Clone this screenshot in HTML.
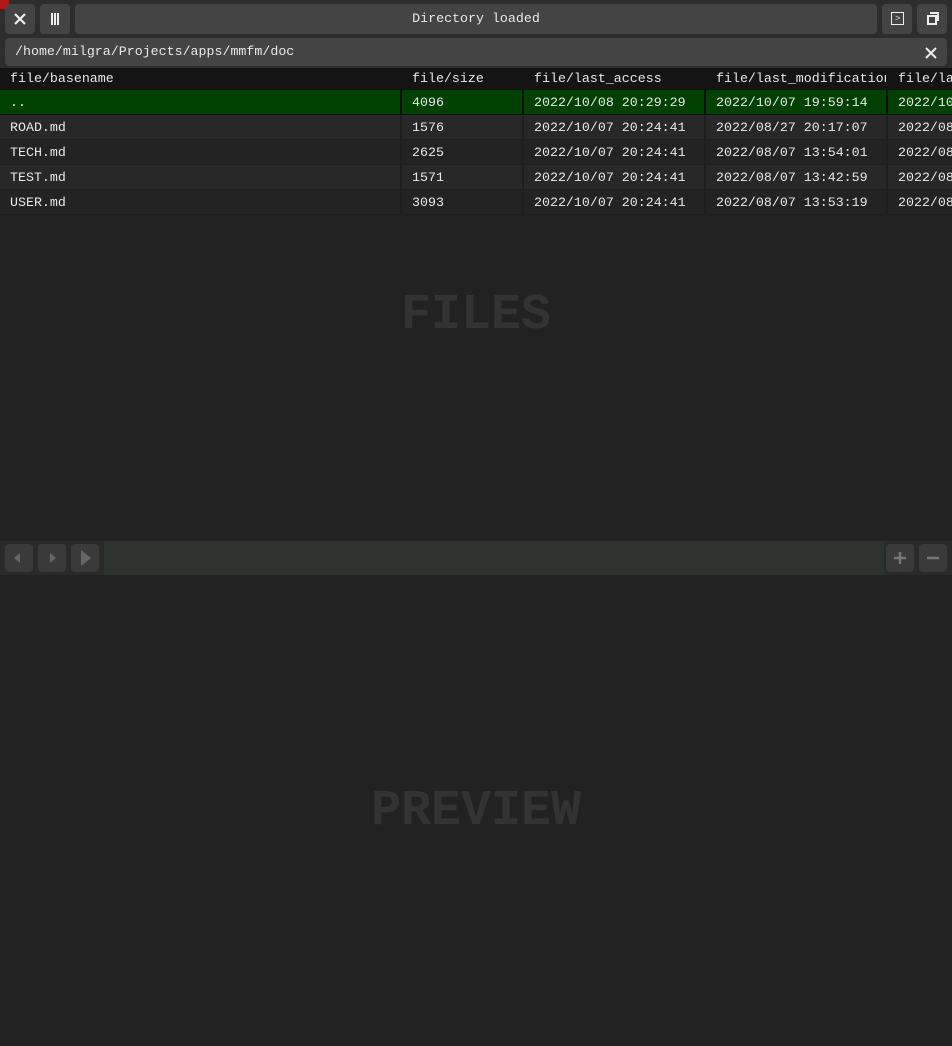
<!DOCTYPE html>
<html><head><style>
*{box-sizing:border-box;margin:0;padding:0}
body{width:952px;height:1046px;background:#222;overflow:hidden;position:relative;font-family:"Liberation Mono",monospace;font-size:13.3px;color:#e8e8e8}
.top{position:absolute;left:0;top:0;width:952px;height:68px;background:#2d2d2d}
.btn{position:absolute;background:#444;border-radius:4px}
.hdr{position:absolute;top:68px;left:0;width:952px;height:22px;background:#141414}
.c{position:absolute;white-space:nowrap;overflow:hidden;line-height:25px;padding-left:10px}
.row{position:absolute;left:0;width:952px;height:25px}
.big{position:absolute;font-size:50px;color:#333;letter-spacing:0;font-weight:bold;text-align:center;width:952px;left:0}
.bar{position:absolute;left:0;top:541px;width:952px;height:34px;background:#2a2a2a}
.bb{position:absolute;top:3px;width:28px;height:28px;background:#3a3a3a;border-radius:4px}
</style></head><body>
<div class="top">
<div style="position:absolute;left:0;top:0;width:9px;height:9px;background:#b01818"></div>
<div class="btn" style="left:5px;top:4px;width:30px;height:30px"><svg width="30" height="30" style="position:absolute;left:0;top:0"><path d="M10 10L20 20M20 10L10 20" stroke="#eee" stroke-width="2.2"/></svg></div>
<div class="btn" style="left:40px;top:4px;width:30px;height:30px"><div style="position:absolute;left:11px;top:9px;width:2px;height:12px;background:#eee"></div><div style="position:absolute;left:14px;top:9px;width:2px;height:12px;background:#eee"></div><div style="position:absolute;left:17px;top:9px;width:2px;height:12px;background:#eee"></div></div>
<div class="btn" style="left:75px;top:4px;width:802px;height:30px;text-align:center;line-height:30px">Directory loaded</div>
<div class="btn" style="left:882px;top:4px;width:30px;height:30px"><div style="position:absolute;left:9px;top:8px;width:13px;height:13px;border:1.5px solid #eee"></div><div style="position:absolute;left:13px;top:11px;font-size:9px;line-height:8px">&gt;</div></div>
<div class="btn" style="left:917px;top:4px;width:30px;height:30px"><div style="position:absolute;left:10px;top:11px;width:10px;height:10px;border:2px solid #eee"></div><div style="position:absolute;left:13px;top:8px;width:9px;height:9px;border-top:2px solid #eee;border-right:2px solid #eee"></div></div>
<div class="btn" style="left:5px;top:38px;width:942px;height:28px;line-height:28px;padding-left:10px">/home/milgra/Projects/apps/mmfm/doc<svg width="14" height="14" style="position:absolute;right:9px;top:8px"><path d="M2 2L12 12M12 2L2 12" stroke="#eee" stroke-width="2"/></svg></div>
</div>
<div class="hdr">
<div class="c" style="left:0;line-height:22px">file/basename</div>
<div class="c" style="left:402px;line-height:22px">file/size</div>
<div class="c" style="left:524px;line-height:22px">file/last_access</div>
<div class="c" style="left:706px;width:180px;line-height:22px">file/last_modification</div>
<div class="c" style="left:888px;line-height:22px">file/last</div>
</div>
<div class="row" style="top:90px;background:#0e0e0e"></div>
<div class="row" style="top:115px;background:#1e1e1e"></div>
<div class="row" style="top:140px;background:#1e1e1e"></div>
<div class="row" style="top:165px;background:#1e1e1e"></div>
<div class="row" style="top:190px;background:#1e1e1e"></div>
<div id="rows"></div>
<script>
var d=[["..","4096","2022/10/08 20:29:29","2022/10/07 19:59:14","2022/10"],["ROAD.md","1576","2022/10/07 20:24:41","2022/08/27 20:17:07","2022/08"],["TECH.md","2625","2022/10/07 20:24:41","2022/08/07 13:54:01","2022/08"],["TEST.md","1571","2022/10/07 20:24:41","2022/08/07 13:42:59","2022/08"],["USER.md","3093","2022/10/07 20:24:41","2022/08/07 13:53:19","2022/08"]];
var L=[0,402,524,706,888],W=[400,120,180,180,64],h="";
d.forEach(function(r,i){var bg=i==0?"#004000":(i%2?"#282828":"#232323");var t=90+i*25;
r.forEach(function(v,j){h+='<div class="c" style="top:'+t+'px;left:'+L[j]+'px;width:'+W[j]+'px;height:24px;background:'+bg+'">'+v+'</div>';});});
document.getElementById("rows").innerHTML=h;
</script>
<div class="big" style="top:286px;line-height:60px">FILES</div>
<div class="bar">
<div style="position:absolute;left:104px;top:0;width:780px;height:34px;background:#2f332f"></div>
<div class="bb" style="left:5px"><div style="position:absolute;left:9px;top:9px;border:5px solid transparent;border-right:6px solid #666;border-left:0"></div></div>
<div class="bb" style="left:38px"><div style="position:absolute;left:12px;top:9px;border:5px solid transparent;border-left:6px solid #666;border-right:0"></div></div>
<div class="bb" style="left:71px"><div style="position:absolute;left:10px;top:6px;border:8px solid transparent;border-left:10px solid #666;border-right:0"></div></div>
<div class="bb" style="left:886px"><svg width="28" height="28"><path d="M8 14H20M14 8V20" stroke="#777" stroke-width="2.5"/></svg></div>
<div class="bb" style="left:919px"><svg width="28" height="28"><path d="M8 14H20" stroke="#777" stroke-width="2.5"/></svg></div>
</div>
<div class="big" style="top:782px;line-height:60px">PREVIEW</div>
</body></html>
